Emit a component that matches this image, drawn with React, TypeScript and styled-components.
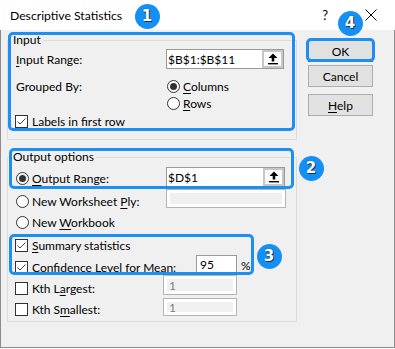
import React from 'react';
import styled, { createGlobalStyle } from 'styled-components';

const GlobalStyle = createGlobalStyle`
  html, body {
    margin: 0;
    padding: 0;
    background: #ffffff;
  }
  body {
    font-family: Lato, "Noto Sans", sans-serif;
    font-size: 12px;
    color: #000000;
  }
  * {
    box-sizing: border-box;
  }
`;

const Window = styled.div`
  position: relative;
  width: 395px;
  height: 348px;
  display: flex;
  flex-direction: column;
`;

const TitleBar = styled.div`
  height: 30px;
  flex: none;
  display: flex;
  align-items: center;
  padding-left: 10px;
  background: #ffffff;
`;

const Title = styled.span`
  flex: 1;
  font-size: 12.2px;
`;

const HelpMark = styled.span`
  font-size: 13px;
`;

const CloseIcon = styled.svg`
  margin-left: 37px;
  margin-right: 18px;
`;

const Body = styled.div`
  flex: 1;
  display: flex;
  background: #f0f0f0;
  border: 1px solid #8c8c8c;
  border-top: none;
  padding: 3px 0 0 6px;
`;

const LeftColumn = styled.div`
  width: 290px;
  display: flex;
  flex-direction: column;
`;

const GroupBox = styled.fieldset<{ $mt: number; $pb: number }>`
  margin: ${(p) => p.$mt}px 0 0 0;
  padding: 0 0 ${(p) => p.$pb}px 0;
  border: 1px solid #dcdcdc;
  min-width: 0;
`;

const Legend = styled.legend`
  margin-left: 3px;
  padding: 0 2px;
  line-height: 14px;
`;

const Row = styled.div<{ $h: number; $mt: number }>`
  display: flex;
  align-items: center;
  height: ${(p) => p.$h}px;
  margin-top: ${(p) => p.$mt}px;
  padding-left: 7px;
`;

const LabelCell = styled.div<{ $w: number }>`
  width: ${(p) => p.$w}px;
  flex: none;
  display: flex;
  align-items: center;
`;

const PlainLabel = styled.span`
  padding-left: 1px;
  white-space: nowrap;
`;

const Choice = styled.label<{ $radio?: boolean }>`
  display: flex;
  align-items: center;
  gap: ${(p) => (p.$radio ? 3 : 4)}px;
  padding-left: ${(p) => (p.$radio ? 1 : 0)}px;
  white-space: nowrap;
`;

const Key = styled.span`
  text-decoration: underline;
  text-underline-offset: 2px;
`;

const CheckBox = styled.span`
  width: 13px;
  height: 13px;
  flex: none;
  display: flex;
  align-items: center;
  justify-content: center;
  background: #ffffff;
  border: 1px solid #333333;
`;

const RadioBox = styled.span`
  width: 13px;
  height: 13px;
  flex: none;
  display: flex;
  align-items: center;
  justify-content: center;
  background: #ffffff;
  border: 1px solid #333333;
  border-radius: 50%;
`;

const RadioDot = styled.span`
  width: 7px;
  height: 7px;
  border-radius: 50%;
  background: #333333;
`;

const Field = styled.div<{ $w: number; $h: number; $lift?: number; $disabled?: boolean }>`
  width: ${(p) => p.$w}px;
  height: ${(p) => p.$h}px;
  flex: none;
  display: flex;
  align-items: center;
  margin-bottom: ${(p) => (p.$lift ?? 0) * 2}px;
  border: 1px solid ${(p) => (p.$disabled ? '#b4b4b4' : '#9a9a9a')};
  background: ${(p) => (p.$disabled ? '#f0f0f0' : '#ffffff')};
  box-shadow: ${(p) => (p.$disabled ? 'inset 0 0 0 3px #ffffff' : 'none')};
  color: ${(p) => (p.$disabled ? '#7d7d7d' : '#000000')};
`;

const FieldText = styled.span<{ $pl: number }>`
  flex: 1;
  padding-left: ${(p) => p.$pl}px;
  white-space: nowrap;
`;

const RefButton = styled.span`
  width: 21px;
  height: 100%;
  flex: none;
  display: flex;
  align-items: center;
  justify-content: center;
  background: #ffffff;
  border: 2px solid #c6c6c6;
`;

const Percent = styled.span`
  margin-left: 4px;
  margin-bottom: 4px;
`;

const ButtonColumn = styled.div`
  display: flex;
  flex-direction: column;
  margin-left: 11px;
`;

const DialogButton = styled.button<{ $mt: number; $default?: boolean }>`
  width: 65px;
  height: 22px;
  margin-top: ${(p) => p.$mt}px;
  padding: 0;
  font: inherit;
  color: #000000;
  background: #e1e1e1;
  border: 1px solid ${(p) => (p.$default ? '#0078d7' : '#adadad')};
`;

const Frame = styled.div<{ $x: number; $y: number; $w: number; $h: number }>`
  position: absolute;
  left: ${(p) => p.$x}px;
  top: ${(p) => p.$y}px;
  width: ${(p) => p.$w}px;
  height: ${(p) => p.$h}px;
  border: 3px solid #1d8ff2;
  border-radius: 5px;
  pointer-events: none;
`;

const Badge = styled.div<{ $cx: number; $cy: number }>`
  position: absolute;
  left: ${(p) => p.$cx - 12.5}px;
  top: ${(p) => p.$cy - 12.5}px;
  width: 25px;
  height: 25px;
  border-radius: 50%;
  background: #1490f4;
  display: flex;
  align-items: center;
  justify-content: center;
  color: #ffffff;
  font-family: "DejaVu Sans", sans-serif;
  font-weight: bold;
  font-size: 15px;
  text-shadow: 0 0 1px #1a2a3a, 1px 1px 0 #1a3550;
`;

const Check = () => (
  <CheckBox>
    <svg width="11" height="11" viewBox="0 0 11 11">
      <path d="M1.5 5.5 L4 8 L9.5 2.5" fill="none" stroke="#444" strokeWidth="1" />
    </svg>
  </CheckBox>
);

const Empty = () => <CheckBox />;

const Radio = ({ on }: { on?: boolean }) => <RadioBox>{on && <RadioDot />}</RadioBox>;

const UpArrow = () => (
  <svg width="10" height="12" viewBox="0 0 10 12">
    <polygon points="5,0.5 9.5,5 6.3,5 6.3,8.5 3.7,8.5 3.7,5 0.5,5" fill="#000" />
    <rect x="0" y="10" width="10" height="1.4" fill="#000" />
  </svg>
);

const App: React.FC = () => {
  return (
    <>
      <GlobalStyle />
      <Window>
        <TitleBar>
          <Title>Descriptive Statistics</Title>
          <HelpMark>?</HelpMark>
          <CloseIcon width="12" height="12" viewBox="0 0 12 12">
            <path d="M0.5 0.5 L11.5 11.5 M11.5 0.5 L0.5 11.5" stroke="#000" strokeWidth="1" />
          </CloseIcon>
        </TitleBar>
        <Body>
          <LeftColumn>
            <GroupBox $mt={0} $pb={10}>
              <Legend>Input</Legend>
              <Row $h={20} $mt={2}>
                <LabelCell $w={151}>
                  <PlainLabel>
                    <Key>I</Key>nput Range:
                  </PlainLabel>
                </LabelCell>
                <Field $w={118} $h={20}>
                  <FieldText $pl={1}>$B$1:$B$11</FieldText>
                  <RefButton>
                    <UpArrow />
                  </RefButton>
                </Field>
              </Row>
              <Row $h={16} $mt={9}>
                <LabelCell $w={151}>
                  <PlainLabel>Grouped By:</PlainLabel>
                </LabelCell>
                <Choice $radio>
                  <Radio on />
                  <span>
                    <Key>C</Key>olumns
                  </span>
                </Choice>
              </Row>
              <Row $h={16} $mt={1}>
                <LabelCell $w={151} />
                <Choice $radio>
                  <Radio />
                  <span>
                    <Key>R</Key>ows
                  </span>
                </Choice>
              </Row>
              <Row $h={16} $mt={2}>
                <Choice>
                  <Check />
                  <span>
                    <Key>L</Key>abels in first row
                  </span>
                </Choice>
              </Row>
            </GroupBox>

            <GroupBox $mt={10} $pb={2}>
              <Legend>Output options</Legend>
              <Row $h={20} $mt={4}>
                <LabelCell $w={151}>
                  <Choice $radio>
                    <Radio on />
                    <span>
                      <Key>O</Key>utput Range:
                    </span>
                  </Choice>
                </LabelCell>
                <Field $w={119} $h={20} $lift={1}>
                  <FieldText $pl={1}>$D$1</FieldText>
                  <RefButton>
                    <UpArrow />
                  </RefButton>
                </Field>
              </Row>
              <Row $h={20} $mt={3}>
                <LabelCell $w={151}>
                  <Choice $radio>
                    <Radio />
                    <span>
                      New Worksheet <Key>P</Key>ly:
                    </span>
                  </Choice>
                </LabelCell>
                <Field $w={120} $h={19} $lift={2.5} $disabled />
              </Row>
              <Row $h={18} $mt={2}>
                <Choice $radio>
                  <Radio />
                  <span>
                    New <Key>W</Key>orkbook
                  </span>
                </Choice>
              </Row>
              <Row $h={18} $mt={5}>
                <Choice>
                  <Check />
                  <span>
                    <Key>S</Key>ummary statistics
                  </span>
                </Choice>
              </Row>
              <Row $h={20} $mt={3}>
                <LabelCell $w={181}>
                  <Choice>
                    <Check />
                    <span>
                      Co<Key>n</Key>fidence Level for Mean:
                    </span>
                  </Choice>
                </LabelCell>
                <Field $w={41} $h={18} $lift={3}>
                  <FieldText $pl={3}>95</FieldText>
                </Field>
                <Percent>%</Percent>
              </Row>
              <Row $h={20} $mt={1}>
                <LabelCell $w={148}>
                  <Choice>
                    <Empty />
                    <span>
                      Kth L<Key>a</Key>rgest:
                    </span>
                  </Choice>
                </LabelCell>
                <Field $w={74} $h={20} $lift={3} $disabled>
                  <FieldText $pl={5}>1</FieldText>
                </Field>
              </Row>
              <Row $h={20} $mt={1}>
                <LabelCell $w={148}>
                  <Choice>
                    <Empty />
                    <span>
                      Kth S<Key>m</Key>allest:
                    </span>
                  </Choice>
                </LabelCell>
                <Field $w={74} $h={18} $lift={2} $disabled>
                  <FieldText $pl={5}>1</FieldText>
                </Field>
              </Row>
            </GroupBox>
          </LeftColumn>

          <ButtonColumn>
            <DialogButton $mt={7} $default>
              OK
            </DialogButton>
            <DialogButton $mt={3}>Cancel</DialogButton>
            <DialogButton $mt={7}>
              <Key>H</Key>elp
            </DialogButton>
          </ButtonColumn>
        </Body>

        <Frame $x={8} $y={32} $w={287} $h={99} />
        <Frame $x={9} $y={148} $w={285} $h={41} />
        <Frame $x={9} $y={234} $w={245} $h={41} />
        <Frame $x={306} $y={38} $w={69} $h={24} />

        <Badge $cx={147} $cy={16}>1</Badge>
        <Badge $cx={311} $cy={168}>2</Badge>
        <Badge $cx={269} $cy={256}>3</Badge>
        <Badge $cx={350} $cy={23}>4</Badge>
      </Window>
    </>
  );
};

export default App;
